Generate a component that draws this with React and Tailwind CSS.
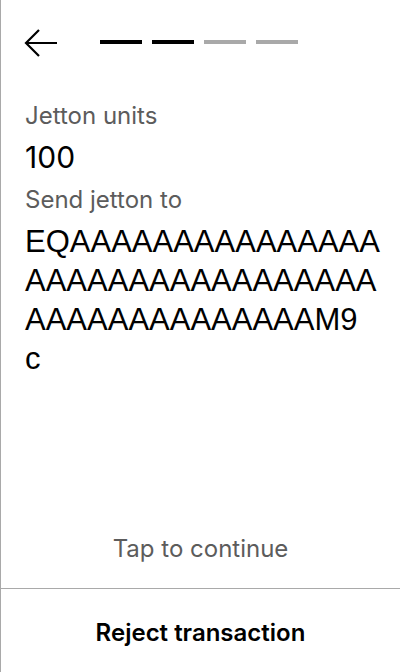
const address = [
  'EQAAAAAAAAAAAAAAA',
  'AAAAAAAAAAAAAAAAA',
  'AAAAAAAAAAAAAAM9',
  'c',
]

const steps = [true, true, false, false]

export default function App() {
  return (
    <div className="w-[400px] h-[672px] bg-white border-l border-[#a9a9a9] flex flex-col font-['Inter',sans-serif]">
      {/* Header */}
      <div className="h-[86px] flex items-center pl-[23px] shrink-0">
        <svg width="34" height="30" viewBox="0 0 34 30" fill="none" className="-mt-[1px]">
          <path d="M33 15H2M15 2L2 15L15 28" stroke="#000" strokeWidth="2.2" />
        </svg>
        <div className="flex gap-[10px] ml-[42px] -mt-[3px]">
          {steps.map((done, i) => (
            <div key={i} className={`w-[42px] h-[4px] ${done ? 'bg-black' : 'bg-[#a9a9a9]'}`} />
          ))}
        </div>
      </div>

      {/* Content */}
      <div className="pl-6 pr-6 pt-[15px]">
        <p className="text-[24px] leading-[30px] text-[#5c5c5c]">Jetton units</p>
        <p className="mt-[8px] text-[30px] leading-[36px] text-black">100</p>
        <p className="mt-[10px] text-[24px] leading-[30px] text-[#5c5c5c]">Send jetton to</p>
        <div className="mt-[7px] font-['Liberation_Sans',Arial,sans-serif] text-[31px] leading-[39px] text-black whitespace-nowrap">
          {address.map((line, i) => <div key={i}>{line}</div>)}
        </div>
      </div>

      <div className="mt-auto pb-[24px] text-center text-[24px] leading-[30px] text-[#5c5c5c]">
        Tap to continue
      </div>

      {/* Footer */}
      <div className="h-[84px] pt-[4px] border-t border-[#a9a9a9] flex items-center justify-center shrink-0">
        <span className="text-[24px] leading-[30px] font-semibold text-black">Reject transaction</span>
      </div>
    </div>
  )
}
